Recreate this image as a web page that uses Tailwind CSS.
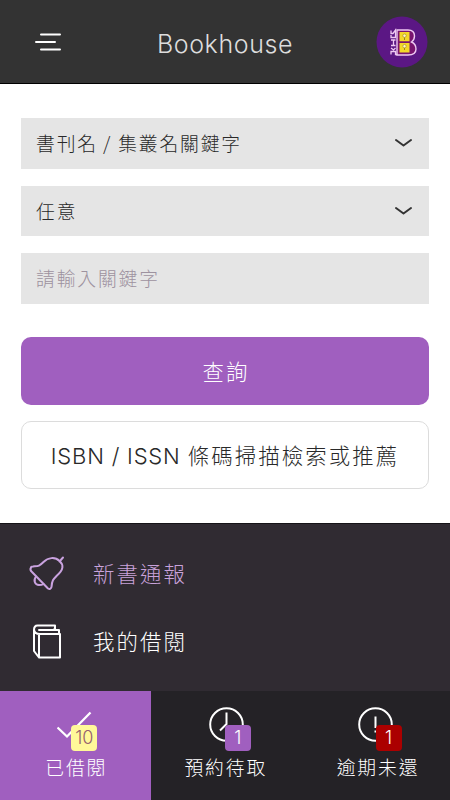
<!DOCTYPE html>
<html lang="zh-Hant">
<head>
<meta charset="utf-8">
<meta name="viewport" content="width=device-width, initial-scale=1">
<title>Bookhouse</title>
<script src="https://cdn.jsdelivr.net/npm/@tailwindcss/browser@4"></script>
</head>
<body class="bg-white">
<div class="flex h-[800px] w-[450px] flex-col overflow-hidden font-['Noto_Sans_CJK_TC',sans-serif] font-light">
  <header class="flex h-[84px] shrink-0 items-center justify-between border-b border-black bg-[#333333] pr-[22px] pl-[35px]">
    <svg class="h-5 w-[27px]" viewBox="0 0 27 20" fill="none" stroke="#fff" stroke-width="2" stroke-linecap="round"><path d="M6 2.5H25M1 10H20M6 17.5H25"/></svg>
    <h1 class="mr-3 ml-[24px] w-[140px] pt-1 text-center font-['Inter',sans-serif] text-[25px] leading-8 font-light tracking-[0.6px] whitespace-nowrap text-[#dddddd]">Bookhouse</h1>
    <svg class="h-[52px] w-[52px]" viewBox="0 0 52 52" fill="none">
      <circle cx="26" cy="26" r="25.5" fill="#5b1784"/>
      <path d="M21 14H32Q38.500 14 38.500 20Q38.500 24 35.500 26Q40 28 40 33Q40 39 32 39H21Z" fill="#79146f" stroke="#efc9f2" stroke-width="1.400"/>
      <path d="M23.500 16H33.500V25.200H23.500ZM23.500 27H33.500V36.500H23.500Z" fill="#f3d928"/>
      <path d="M28.500 21V24M28.500 31V34" stroke="#9a831e"/><circle cx="28.500" cy="19.700" r="1.700" fill="#fff6c5" stroke="#9a831e" stroke-width=".6"/><circle cx="28.500" cy="30.200" r="1.700" fill="#fff6c5" stroke="#9a831e" stroke-width=".6"/>
      <path d="M15 14.500V17.500H17L19.500 14V21.500H15V19M15 24H19.500M15 29.500H19.500M17.500 24V29.500M15 32L17.500 34L19.500 32M15 38.500V35.500H19.500V38.500H21" stroke="#efc9f2" stroke-width="1.300"/>
    </svg>
  </header>

  <main class="flex h-[439px] shrink-0 flex-col px-[21px] pt-[34px]">
    <div class="flex flex-col gap-[17px] text-[18.8px] tracking-[1.85px] text-[#292929]">
      <div class="flex h-[50.5px] items-center justify-between bg-[#e5e5e5] pr-4 pl-[15px]">
        <span>書刊名 <span class="-ml-px">/</span> 集叢名關鍵字</span>
        <svg class="h-2.5 w-[19px]" viewBox="0 0 19 10" fill="none" stroke="#333" stroke-width="2" stroke-linecap="round" stroke-linejoin="round"><path d="M2 2L9.500 7.500L17 2"/></svg>
      </div>
      <div class="flex h-[50.5px] items-center justify-between bg-[#e5e5e5] pr-4 pl-[15px]">
        <span>任意</span>
        <svg class="h-2.5 w-[19px]" viewBox="0 0 19 10" fill="none" stroke="#333" stroke-width="2" stroke-linecap="round" stroke-linejoin="round"><path d="M2 2L9.500 7.500L17 2"/></svg>
      </div>
      <div class="flex h-[50.5px] items-center bg-[#e5e5e5] pl-[15px] text-[#9d929f]">請輸入關鍵字</div>
    </div>
    <button class="mt-[33.5px] h-[67.5px] shrink-0 rounded-[10px] bg-[#a05fbf] pl-0.5 text-[21.4px] tracking-[2.1px] text-white">查詢</button>
    <button class="mt-[16.5px] flex h-[68px] shrink-0 items-center justify-center rounded-[10px] border border-[#dcdcdc] text-[21.4px] tracking-[2.1px] whitespace-nowrap text-[#292929]"><span class="mr-[7px] w-[130px] pt-0.5 text-left font-['Inter',sans-serif] text-[22px] font-light tracking-[0.8px]">ISBN / ISSN</span><span>條碼掃描檢索或推薦</span></button>
  </main>

  <nav class="flex h-[168px] shrink-0 flex-col border-t border-[#151317] bg-[#302b32] pt-4 text-[21.4px] tracking-[2.1px]">
    <a class="flex h-[67.5px] items-center text-[#c9a2da]">
      <svg class="ml-7 h-10 w-10" viewBox="0 0 40 40" fill="none" stroke="#c9a2df" stroke-width="2" stroke-linecap="round" stroke-linejoin="round"><path d="M31.500 7.500L35 3.500M3 13.500Q1.500 16 4 18L20 34.500Q22.500 36 23.500 33C24 26 25.500 25 29 21.500C35.500 16 36 11 31.500 7C27 2.500 20 3.500 15.500 8C11 12.500 10 12 5 12.500Q3 12.500 3 13.500Z"/><path d="M8 22.500C5 26.500 7 31 11 31Q14 31 15.500 30"/></svg>
      <span class="-mt-px ml-[25px]">新書通報</span>
    </a>
    <a class="flex h-[67.5px] items-center text-white">
      <svg class="mt-px ml-7 h-10 w-10" viewBox="0 0 40 40" fill="none" stroke="#fff" stroke-width="2" stroke-linecap="round" stroke-linejoin="round"><path d="M27 7V3.500H9.500Q6 3.500 6 8V29L11 35.500H32V12H12Q6 12 6 7M11 13V35.500M11 8H26L27 6M31 12V8H12"/></svg>
      <span class="ml-[25px]">我的借閱</span>
    </a>
  </nav>

  <footer class="grid h-[109px] shrink-0 grid-cols-[150.5px_150.500px_149px] bg-[#242226] text-[18.8px] tracking-[1.900px] text-white">
    <a class="flex flex-col items-center bg-[#a05fbf] pt-[15px]">
      <span class="relative"><svg class="h-9 w-9" viewBox="0 0 36 36" fill="none" stroke="#fff" stroke-width="2.300"><path d="M0.500 21.500L10 30.500L33.500 6.500"/></svg><b class="absolute top-[18.5px] left-[14px] flex h-[26px] w-[26px] items-center justify-center rounded-[4px] bg-[#fff899] font-['Inter',sans-serif] text-[18px] font-light tracking-normal text-[#94606f]">10</b></span>
      <span class="mt-[11px] pl-0.5">已借閱</span>
    </a>
    <a class="flex flex-col items-center pt-[15px]">
      <span class="relative"><svg class="h-9 w-9" viewBox="0 0 36 36" fill="none" stroke="#fff" stroke-width="2"><circle cx="18.500" cy="18.500" r="16.300"/><path d="M18.500 6.500V18L12 24.500"/></svg><b class="absolute top-[18.5px] left-[17px] flex h-[26px] w-[26px] items-center justify-center rounded-[4px] bg-[#a05fbf] font-['Inter',sans-serif] text-[18px] font-light tracking-normal">1</b></span>
      <span class="mt-[11px]">預約待取</span>
    </a>
    <a class="flex flex-col items-center pt-[15px]">
      <span class="relative"><svg class="h-9 w-9" viewBox="0 0 36 36" fill="none" stroke="#fff" stroke-width="2"><circle cx="17.500" cy="18.500" r="16.300"/><path d="M17.500 10.500V22M17.500 24.500V26.500"/></svg><b class="absolute top-[18.5px] left-[18px] flex h-[26px] w-[26px] items-center justify-center rounded-[4px] bg-[#ab0000] font-['Inter',sans-serif] text-[18px] font-light tracking-normal">1</b></span>
      <span class="mt-[11px] pl-[5px]">逾期未還</span>
    </a>
  </footer>
</div>
</body>
</html>
